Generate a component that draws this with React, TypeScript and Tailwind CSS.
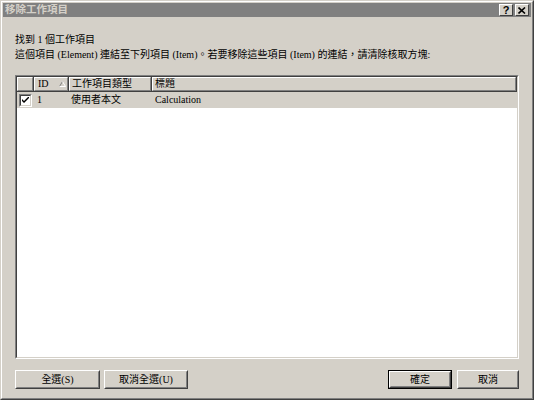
import React from "react";

const F = { fontFamily: '"Liberation Serif", "Noto Sans CJK TC", serif' };

function Btn({ label, w, def }: { label: string; w: string; def?: boolean }) {
  const inner = (
    <div className="h-full w-full border border-t-white border-l-white border-r-[#404040] border-b-[#404040]">
      <div className="flex h-full w-full items-center justify-center border border-t-[#d4d0c8] border-l-[#d4d0c8] border-r-[#808080] border-b-[#808080] text-[10px] leading-none text-black">
        {label}
      </div>
    </div>
  );
  return (
    <div className={`${w} h-[19px] box-border ${def ? "border border-black" : ""}`}>{inner}</div>
  );
}

function HeadCell({ w, children, last }: { w: string; children?: React.ReactNode; last?: boolean }) {
  return (
    <div className={`${w} ${last ? "flex-1" : ""} h-full border-r border-b border-r-[#404040] border-b-[#404040]`}>
      <div className="flex h-full items-center border-t border-l border-r border-b border-t-white border-l-white border-r-[#808080] border-b-[#808080] pl-[2px] text-[10px] leading-none">
        {children}
      </div>
    </div>
  );
}

export default function App() {
  return (
    <div style={F} className="w-[534px] h-[400px] bg-[#d4d0c8] border border-t-[#d4d0c8] border-l-[#d4d0c8] border-r-[#404040] border-b-[#404040] box-border">
      <div className="h-full w-full border border-t-white border-l-white border-r-[#808080] border-b-[#808080] p-px flex flex-col">
        {/* title bar */}
        <div className="h-[14px] bg-[#808080] flex items-center justify-between pl-[2px] pr-[2px]">
          <span className="text-[10.5px] font-bold leading-none text-[#d4d0c8]">移除工作項目</span>
          <div className="flex gap-[2px]">
            {["?", "×"].map((c, i) => (
              <div key={i} className="w-[14px] h-[12px] bg-[#d4d0c8] border border-t-white border-l-white border-r-[#404040] border-b-[#404040] flex items-center justify-center">
                {i === 0 ? (
                  <span className="text-[11px] font-bold leading-none text-black" style={{ fontFamily: '"Liberation Sans", sans-serif' }}>?</span>
                ) : (
                  <svg width="8" height="7" viewBox="0 0 8 7">
                    <path d="M0.5 0.5 L7 6.5 M7 0.5 L0.5 6.5" stroke="black" strokeWidth="1.6" />
                  </svg>
                )}
              </div>
            ))}
          </div>
        </div>

        {/* content */}
        <div className="flex-1 flex flex-col pl-[12px] pr-[12px]">
          <div className="mt-[17px] h-[12px] text-[10px] leading-[12px] text-black">找到 1 個工作項目</div>
          <div className="mt-[3px] h-[12px] text-[10px] leading-[12px] text-black">
            這個項目 (Element) 連結至下列項目 (Item)。若要移除這些項目 (Item) 的連結，請清除核取方塊:
          </div>

          {/* list box */}
          <div className="mt-[14px] h-[284px] border border-t-[#808080] border-l-[#808080] border-r-white border-b-white">
            <div className="h-full w-full border border-t-[#404040] border-l-[#404040] border-r-[#d4d0c8] border-b-[#d4d0c8] bg-white flex flex-col">
              <div className="h-[15px] flex bg-[#d4d0c8]">
                <HeadCell w="w-[17px]" />
                <HeadCell w="w-[35px]">
                  <span className="ml-[1px]">ID</span>
                  <svg className="ml-[10px] shrink-0" width="7" height="6" viewBox="0 0 7 6">
                    <path d="M0.5 5.5 L3.5 0.5" stroke="#808080" strokeWidth="1" fill="none" />
                    <path d="M3.5 0.5 L6.5 5.5 L0.5 5.5" stroke="#ffffff" strokeWidth="1" fill="none" />
                  </svg>
                </HeadCell>
                <HeadCell w="w-[83px]">工作項目類型</HeadCell>
                <HeadCell w="w-[368px]" last>標題</HeadCell>
              </div>
              <div className="h-[16px] flex items-center bg-[#d4d0c8] text-[10px] leading-none text-black">
                <div className="w-[17px] flex justify-center">
                  <div className="w-[13px] h-[13px] border border-t-[#808080] border-l-[#808080] border-r-white border-b-white">
                    <div className="w-full h-full border border-t-[#404040] border-l-[#404040] border-r-[#d4d0c8] border-b-[#d4d0c8] bg-white flex items-center justify-center">
                      <svg width="7" height="7" viewBox="0 0 7 7">
                        <path d="M0 2 L0 4 L2 6 L7 1 L7 -1 L2 4 Z" fill="black" />
                      </svg>
                    </div>
                  </div>
                </div>
                <div className="w-[35px] pl-[3px]">1</div>
                <div className="w-[83px] pl-[2px]">使用者本文</div>
                <div className="flex-1 pl-[3px]">Calculation</div>
              </div>
            </div>
          </div>

          {/* buttons */}
          <div className="mt-[11px] flex">
            <Btn label="全選(S)" w="w-[85px]" />
            <div className="w-[4px]" />
            <Btn label="取消全選(U)" w="w-[84px]" />
            <div className="flex-1" />
            <Btn label="確定" w="w-[64px]" def />
            <div className="w-[5px]" />
            <Btn label="取消" w="w-[62px]" />
          </div>
        </div>
      </div>
    </div>
  );
}
